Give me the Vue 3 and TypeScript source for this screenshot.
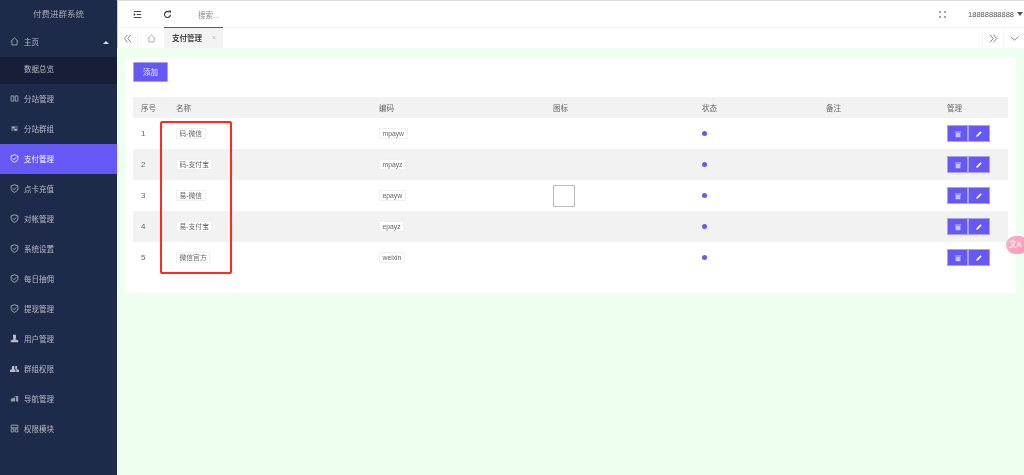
<script setup lang="ts">
interface MenuItem { label: string; icon: string; active?: boolean }
const menu: MenuItem[] = [
  { label: '分站管理', icon: 'columns' },
  { label: '分站群组', icon: 'sliders' },
  { label: '支付管理', icon: 'shield', active: true },
  { label: '点卡充值', icon: 'shield' },
  { label: '对帐管理', icon: 'shield' },
  { label: '系统设置', icon: 'shield' },
  { label: '每日抽佣', icon: 'shield' },
  { label: '提现管理', icon: 'shield' },
  { label: '用户管理', icon: 'user' },
  { label: '群组权限', icon: 'users' },
  { label: '导航管理', icon: 'nav' },
  { label: '权限模块', icon: 'grid' },
]
const rows = [
  { id: 1, name: '码-微信', code: 'mpayw', pic: false },
  { id: 2, name: '码-支付宝', code: 'mpayz', pic: false },
  { id: 3, name: '易-微信', code: 'epayw', pic: true },
  { id: 4, name: '易-支付宝', code: 'epayz', pic: false },
  { id: 5, name: '微信官方', code: 'weixin', pic: false },
]
</script>

<template>
  <div class="page">
    <aside class="side">
      <div class="brand">付费进群系统</div>
      <div class="item home">
        <svg class="ic" viewBox="0 0 12 12"><path d="M1 6 6 1.200 11 6M2.600 5v5.600h6.800V5" fill="none" stroke="currentColor" stroke-width="1"/></svg>
        <span>主页</span>
        <i class="caret"></i>
      </div>
      <div class="sub">数据总览</div>
      <div v-for="m in menu" :key="m.label" class="item" :class="{ active: m.active }">
        <svg class="ic" viewBox="0 0 12 12">
          <template v-if="m.icon === 'columns'">
            <path d="M1.500 2.500h3.500v7H1.500zM7 2.500h3.500v7H7z" fill="none" stroke="currentColor" stroke-width="1"/>
          </template>
          <template v-else-if="m.icon === 'sliders'">
            <path d="M1.500 2.500h9v7h-9z" fill="currentColor" opacity=".35"/>
            <path d="M3 3.500h3v2H3zM6 6.500h3v2H6z" fill="currentColor"/>
          </template>
          <template v-else-if="m.icon === 'shield'">
            <path d="M6 1 10.500 2.500V6c0 2.600-2 4.200-4.500 5C3.500 10.200 1.500 8.600 1.500 6V2.500z" fill="none" stroke="currentColor" stroke-width="1.100"/>
            <path d="M3.800 5.800 5.500 7.500 8.300 4.600" fill="none" stroke="currentColor" stroke-width="1.100"/>
          </template>
          <template v-else-if="m.icon === 'user'">
            <path d="M4 1h4v4.200L7.200 7l3.800 1.500V11H1V8.500L4.800 7 4 5.200z" fill="currentColor"/>
          </template>
          <template v-else-if="m.icon === 'users'">
            <path d="M2.800 2.500h3v3.200l-.5 1 2 1.300V10.500H0V8l2.800-1.300-.5-1zM7 2.500h2.500v3l-.5 1L12 8v2.500H8.500V7.500L7 6.500z" fill="currentColor"/>
          </template>
          <template v-else-if="m.icon === 'nav'">
            <path d="M1 6.500 4 5h3v5H1zM5 4 8 2.500h3V10H8V4z" fill="currentColor" opacity=".75"/>
          </template>
          <template v-else>
            <path d="M1.500 1.500h9v3.500h-9zM1.500 6.500h3.500v4H1.500zM7 6.500h3.500v4H7z" fill="none" stroke="currentColor" stroke-width="1"/>
          </template>
        </svg>
        <span>{{ m.label }}</span>
      </div>
    </aside>

    <div class="right">
      <header class="top">
        <svg class="t-ic menu-ic" viewBox="0 0 12 12"><path d="M1 2h10M5 6h6M1 10h10" stroke="#333" stroke-width="1.200" fill="none"/><path d="M1 4v4l2.500-2z" fill="#333"/></svg>
        <svg class="t-ic refresh" viewBox="0 0 12 12"><path d="M10 6.500A4 4 0 1 1 8.600 3" stroke="#333" stroke-width="1.500" fill="none"/><path d="M7 .8h3.600v3.600z" fill="#333"/></svg>
        <span class="search">搜索...</span>
        <svg class="expand" viewBox="0 0 8 8"><path d="M.5 2.500V.5h2M5.500.5h2v2M.5 5.500v2h2M5.500 7.500h2v-2M1 1l1.500 1.500M7 1 5.500 2.500M1 7l1.500-1.500M7 7 5.500 5.500" stroke="#777" stroke-width=".8" fill="none"/></svg>
        <span class="phone">18888888888</span>
        <i class="user-caret"></i>
      </header>
      <nav class="tabs">
        <div class="tab-btn first">
          <svg viewBox="0 0 10 10"><path d="M5 .8 1.500 5 5 9.200M8.800.8 5.300 5l3.500 4.200" fill="none" stroke="#777" stroke-width="1"/></svg>
        </div>
        <div class="tab-btn home-tab">
          <svg viewBox="0 0 12 12"><path d="M1 6 6 1.200 11 6M2.600 5v5.600h6.800V5" fill="none" stroke="#999" stroke-width="1"/></svg>
        </div>
        <div class="tab-cur"><b>支付管理</b><span class="x">×</span></div>
        <div class="grow"></div>
        <div class="tab-btn edge">
          <svg viewBox="0 0 10 10"><path d="M1.200.8 4.700 5 1.200 9.200M5 .8 8.500 5 5 9.200" fill="none" stroke="#777" stroke-width="1"/></svg>
        </div>
        <div class="tab-btn edge">
          <svg viewBox="0 0 10 10"><path d="M1 3l4 4 4-4" fill="none" stroke="#777" stroke-width="1"/></svg>
        </div>
      </nav>
      <main class="body">
        <section class="card">
          <button class="add">添加</button>
          <table class="tbl">
            <colgroup>
              <col class="c1" /><col class="c2" /><col class="c3" />
              <col class="c4" /><col class="c5" /><col class="c6" /><col />
            </colgroup>
            <thead>
              <tr><th>序号</th><th>名称</th><th>编码</th><th>图标</th><th>状态</th><th>备注</th><th>管理</th></tr>
            </thead>
            <tbody>
              <tr v-for="r in rows" :key="r.id">
                <td class="num">{{ r.id }}</td>
                <td><span class="tag">{{ r.name }}</span></td>
                <td><span class="tag">{{ r.code }}</span></td>
                <td><span v-if="r.pic" class="pic"></span></td>
                <td><i class="dot"></i></td>
                <td></td>
                <td>
                  <div class="ops">
                    <button class="op">
                      <svg viewBox="0 0 10 10"><path d="M1 1.800h8v1.200H1zM2 3.600h6v5.600H2z" fill="#c5c3ff"/></svg>
                    </button>
                    <button class="op">
                      <svg viewBox="0 0 10 10"><path d="M1.500 8.500 2 6.500 6.800 1.700l1.500 1.500L3.500 8z" fill="#fff"/></svg>
                    </button>
                  </div>
                </td>
              </tr>
            </tbody>
          </table>
        </section>
      </main>
    </div>
    <div class="annot"></div>
    <div class="float"><span>文A</span></div>
  </div>
</template>

<style>
html, body { margin: 0; overflow: hidden; }
</style>

<style scoped>
.page {
  position: relative;
  display: flex;
  width: 1024px;
  height: 475px;
  overflow: hidden;
  font-family: "Liberation Sans", "Noto Sans CJK SC", sans-serif;
  font-size: 7.500px;
  color: #666;
  background: #fff;
  filter: blur(.2px);
}
.side {
  width: 117px;
  flex: none;
  background: #1e2a4a;
  color: #b9bdc8;
  border-right: 1px solid #b9d4c5;
  margin-right: -1px;
}
.brand {
  height: 28px;
  line-height: 28px;
  text-align: center;
  font-size: 8.500px;
  color: #a4a9b6;
}
.item {
  display: flex;
  align-items: center;
  height: 30px;
  padding: 0 0 2px 10px;
  box-sizing: border-box;
  gap: 4px;
  position: relative;
}
.item.home { height: 29px; }
.item.active { background: #6558f5; color: #fff; }
.ic { width: 9px; height: 9px; flex: none; margin-right: 1px; }
.caret {
  position: absolute;
  right: 8px;
  top: 13px;
  border: 3px solid transparent;
  border-top: 0;
  border-bottom: 3px solid #ddd;
}
.sub {
  height: 27px;
  line-height: 26px;
  padding-left: 24px;
  background: #161f37;
}
.right { flex: 1; display: flex; flex-direction: column; min-width: 0; }
.top {
  height: 27px;
  flex: none;
  display: flex;
  align-items: center;
  border-top: 1px solid #ddd;
  box-sizing: border-box;
  padding-left: 16px;
}
.t-ic { width: 9px; height: 9px; flex: none; }
.menu-ic { margin-right: 21px; }
.refresh { margin-right: 26px; }
.search { color: #888; }
.expand { width: 7px; height: 7px; margin-left: auto; margin-right: 22px; }
.phone { color: #555; margin-right: 3px; }
.user-caret {
  border: 3px solid transparent;
  border-bottom: 0;
  border-top: 4px solid #555;
  margin-right: 1px;
}
.tabs {
  height: 21px;
  flex: none;
  display: flex;
  align-items: stretch;
  border-top: 1px solid #f5f5f5;
  box-sizing: border-box;
}
.tab-btn {
  display: flex;
  align-items: center;
  justify-content: center;
  width: 21px;
  box-sizing: border-box;
}
.tab-btn svg { width: 9px; height: 9px; }
.tab-btn.first { border-right: 1px solid #f5f5f5; }
.home-tab { width: 26px; }
.tab-cur {
  width: 59px;
  margin-top: -1px;
  padding: 0 0 2px 8px;
  background: #f3f3f3;
  border-top: 1px solid #555b72;
  display: flex;
  align-items: center;
  box-sizing: border-box;
  color: #444;
}
.tab-cur b { font-weight: 700; }
.x { margin-left: 10px; color: #bbb; }
.grow { flex: 1; }
.edge { border-left: 1px solid #f5f5f5; }
.body { flex: 1; background: #eefff0; padding: 9px 8px 0; box-sizing: border-box; }
.card {
  background: #fff;
  height: 236px;
  padding: 5px 8px;
  box-sizing: border-box;
}
.add {
  display: block;
  width: 35px;
  height: 20px;
  padding: 0 0 2px;
  border: 1px solid #a7a1fa;
  border-radius: 1px;
  background: #6558f5;
  color: #f0efff;
  font: inherit;
}
.tbl {
  margin-top: 15px;
  width: 875px;
  border-collapse: collapse;
  table-layout: fixed;
}
.c1 { width: 35px; }
.c2 { width: 203px; }
.c3 { width: 174px; }
.c4 { width: 149px; }
.c5 { width: 124px; }
.c6 { width: 121px; }
th {
  height: 21px;
  padding: 0 8px;
  text-align: left;
  font-weight: 400;
  background: #f2f2f2;
  color: #666;
}
td { height: 31px; padding: 0 8px; }
tbody tr:nth-child(even) td { background: #f2f2f2; }
.num { color: #666; font-size: 8px; }
.tag {
  display: inline-block;
  height: 9px;
  line-height: 9px;
  padding: 0 2.500px;
  border: 1px solid #f0f0f0;
  background: #fff;
  color: #666;
  font-size: 6.800px;
  vertical-align: middle;
}
.pic {
  display: block;
  width: 22px;
  height: 22px;
  box-sizing: border-box;
  border: 1px solid #bbb;
  background: #fff;
}
.dot {
  display: block;
  width: 5px;
  height: 5px;
  border-radius: 50%;
  background: #6558f5;
}
.ops { display: flex; width: 43px; }
.op {
  width: 21px;
  height: 17px;
  padding: 0;
  border: 1px solid #a7a1fa;
  background: #6558f5;
  display: flex;
  align-items: center;
  justify-content: center;
}
.op + .op { width: 22px; }
.op svg { width: 8px; height: 8px; }
.annot {
  position: absolute;
  left: 160px;
  top: 121px;
  width: 72px;
  height: 153px;
  box-sizing: border-box;
  border: 2px solid #ff2a1a;
  border-radius: 2px;
}
.float {
  position: absolute;
  left: 1006px;
  top: 236px;
  width: 22px;
  height: 18px;
  border-radius: 9px;
  background: linear-gradient(135deg, #f9b3c8, #f598bb);
  color: #fff;
  font-size: 7.500px;
  line-height: 17px;
  padding-left: 3px;
  box-sizing: border-box;
}
</style>
